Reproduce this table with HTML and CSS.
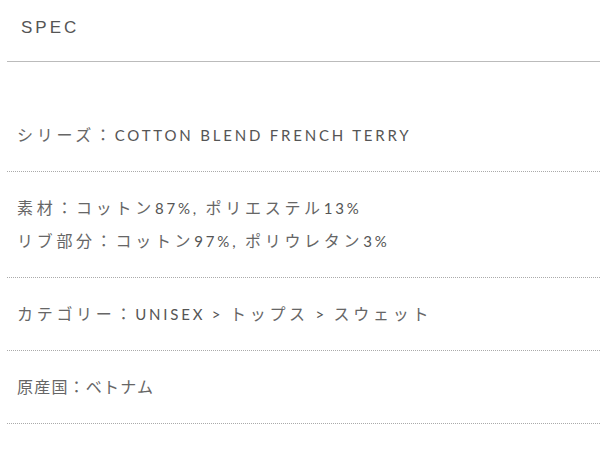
FILE: index.html
```html
<!DOCTYPE html>
<html lang="ja">
<head>
<meta charset="utf-8">
<link rel="stylesheet" href="styles.css">
</head>
<body>
<section class="spec">
  <h2 class="spec-title">SPEC</h2>
  <ul class="spec-list">
    <li class="spec-item"><span class="ja">シリーズ：</span>COTTON BLEND FRENCH TERRY</li>
    <li class="spec-item"><span class="ja">素材：コットン</span>87%, <span class="ja">ポリエステル</span>13%<br><span class="ja">リブ部分：コットン</span>97%, <span class="ja">ポリウレタン</span>3%</li>
    <li class="spec-item"><span class="ja">カテゴリー：</span>UNISEX &gt; <span class="ja">トップス</span> &gt; <span class="ja">スウェット</span></li>
    <li class="spec-item"><span class="ja ja-tight">原産国：ベトナム</span></li>
  </ul>
</section>
</body>
</html>
```
FILE: styles.css
```css
html, body {
  margin: 0;
  padding: 0;
  background: #fff;
}
body {
  font-family: "Lato", "Noto Sans CJK JP", sans-serif;
  color: #555;
  overflow: hidden;
}
.spec {
  padding-left: 7px;
}
.spec-title {
  margin: 0;
  height: 61px;
  line-height: 55px;
  padding-left: 14px;
  font-family: "Liberation Sans", "Noto Sans", sans-serif;
  font-size: 17px;
  font-weight: 400;
  letter-spacing: 3px;
  color: #555;
  border-bottom: 1px solid #bbb;
}
.spec-list {
  list-style: none;
  margin: 37px 0 0;
  padding: 0;
}
.spec-item {
  padding: 20px 0 19px 10px;
  line-height: 33px;
  font-size: 15px;
  letter-spacing: 2.8px;
  border-bottom: 1px dotted #aaa;
}
.ja {
  font-family: "Noto Sans CJK JP", sans-serif;
  font-size: 16px;
  line-height: 16px;
  letter-spacing: 3.7px;
  color: #666;
}
.ja-tight {
  letter-spacing: 1.2px;
}
```
